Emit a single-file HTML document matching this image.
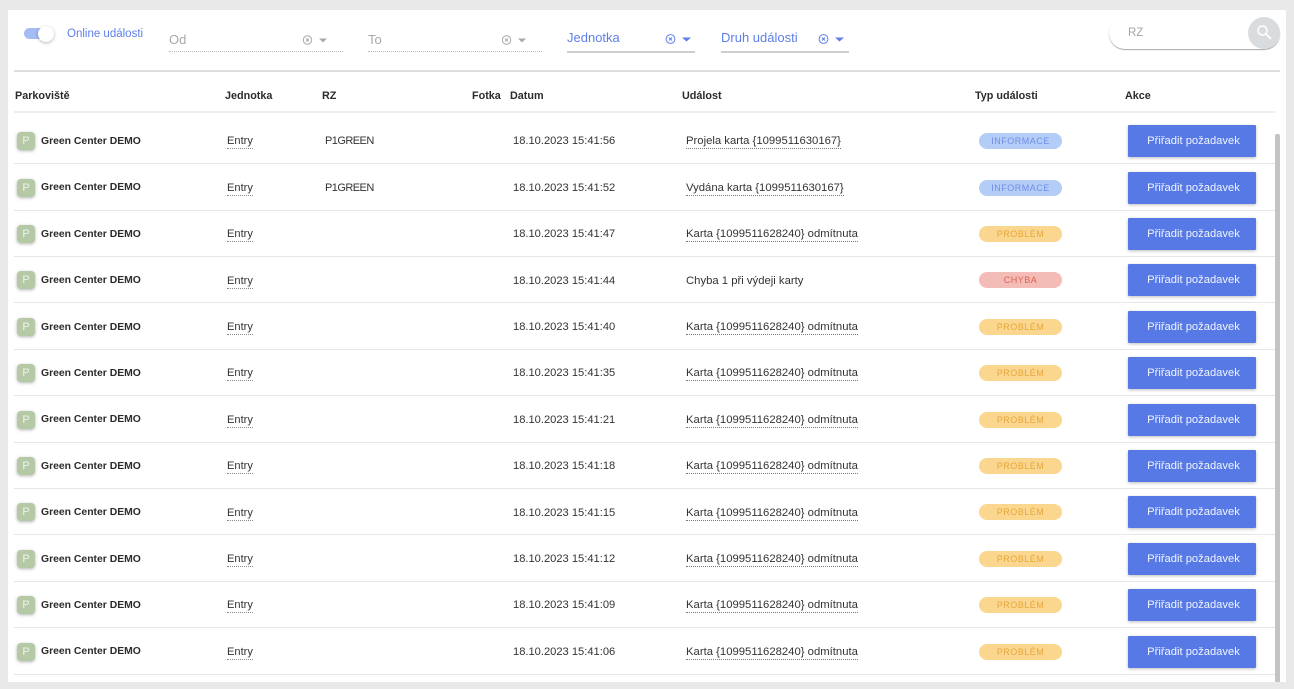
<!DOCTYPE html>
<html lang="cs">
<head>
<meta charset="utf-8">
<title>Online události</title>
<style>
html,body{margin:0;padding:0;width:1294px;height:689px;overflow:hidden;background:#e9e9e9}
body{font-family:"Liberation Sans",sans-serif;color:#222;position:relative}
*{box-sizing:border-box}
#card{position:absolute;left:8px;top:10px;width:1278px;height:672px;background:#fff}
.a{position:absolute;white-space:nowrap}
.h{position:absolute;top:89px;line-height:14px;font-size:10.8px;font-weight:bold;color:#2b2b2b;white-space:nowrap}
.sel{position:absolute;top:51px;height:1px;border-bottom:1px dotted #bbb}
.sel2{position:absolute;top:51px;height:2px;background:#cfcfcf}
.ph{position:absolute;font-size:13px;line-height:16px;white-space:nowrap}
.row{position:absolute;left:14px;width:1261px;height:46.4px;margin-top:.3px;border-bottom:1px solid #e6e6e6}
.row>*{position:absolute;white-space:nowrap}
.p{left:3px;top:14.5px;width:18px;height:18px;border-radius:4px;background:#b5c9a6;box-shadow:0 1px 3px rgba(0,0,0,.3);color:#eef3ea;font-size:11px;line-height:18px;text-align:center}
.n{left:27px;top:17.200px;font-size:10.400px;line-height:14px;font-weight:bold;color:#2b2b2b}
.e{left:213px;top:16.700px;font-size:11.100px;line-height:14px;color:#333;border-bottom:1px dotted #888}
.z{left:311px;top:16.700px;font-size:11px;line-height:14px;color:#333;letter-spacing:-.55px}
.d{left:499px;top:16.700px;font-size:11.150px;line-height:14px;color:#333}
.u{left:672px;top:16.700px;font-size:11.300px;line-height:14px;color:#333;border-bottom:1px dotted #777}
.t{left:965px;top:15.5px;width:83px;height:16px;border-radius:8px;font-size:9px;line-height:16px;text-align:center;letter-spacing:.5px}
.i{background:#b4cdf6;color:#6f8fe8}
.w{background:#fbd68f;color:#e4a83a}
.x{background:#f3bcb6;color:#e0604f}
.b{left:1113.5px;top:7.5px;width:128px;height:32px;padding-left:4px;background:#5679e6;border-radius:1px;box-shadow:0 1px 3px rgba(0,0,0,.25);color:#f1f4fe;font-size:11.200px;line-height:32px;text-align:center}
</style>
</head>
<body>
<div id="card"></div>

<div class="a" style="left:24px;top:28px;width:22px;height:11px;border-radius:5.5px;background:#a5bbf3"></div>
<div class="a" style="left:38px;top:26px;width:16px;height:16px;border-radius:50%;background:#fff;box-shadow:0 1px 3px rgba(0,0,0,.3)"></div>
<div class="a" style="left:67px;top:27px;font-size:11.500px;line-height:14px;color:#5e7fe8">Online události</div>

<div class="ph" style="left:169px;top:32px;color:#a8a8a8">Od</div>
<svg class="a" style="left:302px;top:35px" width="28" height="10" viewBox="0 0 28 10"><circle cx="5.5" cy="5" r="4.2" fill="none" stroke="#aaa"/><path d="M4 3.5l3 3M7 3.5l-3 3" stroke="#aaa"/><path d="M17 3.5h8l-4 4z" fill="#aaa"/></svg>
<div class="sel" style="left:169px;width:174px"></div>

<div class="ph" style="left:368px;top:32px;color:#a8a8a8">To</div>
<svg class="a" style="left:501px;top:35px" width="28" height="10" viewBox="0 0 28 10"><circle cx="5.5" cy="5" r="4.2" fill="none" stroke="#aaa"/><path d="M4 3.5l3 3M7 3.5l-3 3" stroke="#aaa"/><path d="M17 3.5h8l-4 4z" fill="#aaa"/></svg>
<div class="sel" style="left:368px;width:174px"></div>

<div class="ph" style="left:567px;top:30px;color:#5e7fe8">Jednotka</div>
<svg class="a" style="left:664.500px;top:34px" width="28" height="10" viewBox="0 0 28 10"><circle cx="5.5" cy="5" r="4.4" fill="none" stroke="#5e7fe8"/><path d="M4 3.5l3 3M7 3.5l-3 3" stroke="#5e7fe8"/><path d="M17 3.5h9l-4.500 4z" fill="#5e7fe8"/></svg>
<div class="sel2" style="left:567px;width:128px"></div>

<div class="ph" style="left:721px;top:30px;color:#5e7fe8">Druh události</div>
<svg class="a" style="left:818px;top:34px" width="28" height="10" viewBox="0 0 28 10"><circle cx="5.5" cy="5" r="4.4" fill="none" stroke="#5e7fe8"/><path d="M4 3.5l3 3M7 3.5l-3 3" stroke="#5e7fe8"/><path d="M17 3.5h9l-4.500 4z" fill="#5e7fe8"/></svg>
<div class="sel2" style="left:721px;width:128px"></div>

<div class="a" style="left:1109px;top:17px;width:171px;height:32px;border-radius:16px;background:#fff;box-shadow:0 1px 1px rgba(0,0,0,.35)"></div>
<div class="a" style="left:1128px;top:26px;font-size:11.500px;line-height:14px;color:#a5a5a5">RZ</div>
<div class="a" style="left:1248px;top:17px;width:32px;height:32px;border-radius:50%;background:#d8dcdf"></div>
<svg class="a" style="left:1256px;top:24px" width="17" height="17" viewBox="0 0 17 17"><circle cx="6.500" cy="6.500" r="4.500" fill="none" stroke="#fff" stroke-width="1.500"/><path d="M10 10l5 5" stroke="#fff" stroke-width="1.800"/></svg>

<div class="a" style="left:14px;top:69.500px;width:1266px;height:2px;background:#dedede"></div>

<div class="h" style="left:15px">Parkoviště</div>
<div class="h" style="left:225px">Jednotka</div>
<div class="h" style="left:322px">RZ</div>
<div class="h" style="left:472px">Fotka</div>
<div class="h" style="left:510px">Datum</div>
<div class="h" style="left:682px">Událost</div>
<div class="h" style="left:975px">Typ události</div>
<div class="h" style="left:1125px">Akce</div>
<div class="a" style="left:14px;top:111px;width:1261px;height:2px;background:#eeeeee"></div>

<div class="a" style="left:1275px;top:134px;width:5px;height:548px;background:#c4c4c4;border-radius:2px 2px 0 0"></div>

<div class="row" style="top:117.500px"><span class="p">P</span><span class="n">Green Center DEMO</span><span class="e">Entry</span><span class="z">P1GREEN</span><span class="d">18.10.2023 15:41:56</span><span class="u">Projela karta {1099511630167}</span><span class="t i">INFORMACE</span><span class="b">Přiřadit požadavek</span></div>
<div class="row" style="top:163.900px"><span class="p">P</span><span class="n">Green Center DEMO</span><span class="e">Entry</span><span class="z">P1GREEN</span><span class="d">18.10.2023 15:41:52</span><span class="u">Vydána karta {1099511630167}</span><span class="t i">INFORMACE</span><span class="b">Přiřadit požadavek</span></div>
<div class="row" style="top:210.300px"><span class="p">P</span><span class="n">Green Center DEMO</span><span class="e">Entry</span><span class="d">18.10.2023 15:41:47</span><span class="u">Karta {1099511628240} odmítnuta</span><span class="t w">PROBLÉM</span><span class="b">Přiřadit požadavek</span></div>
<div class="row" style="top:256.700px"><span class="p">P</span><span class="n">Green Center DEMO</span><span class="e">Entry</span><span class="d">18.10.2023 15:41:44</span><span class="u" style="border:0">Chyba 1 při výdeji karty</span><span class="t x">CHYBA</span><span class="b">Přiřadit požadavek</span></div>
<div class="row" style="top:303.100px"><span class="p">P</span><span class="n">Green Center DEMO</span><span class="e">Entry</span><span class="d">18.10.2023 15:41:40</span><span class="u">Karta {1099511628240} odmítnuta</span><span class="t w">PROBLÉM</span><span class="b">Přiřadit požadavek</span></div>
<div class="row" style="top:349.500px"><span class="p">P</span><span class="n">Green Center DEMO</span><span class="e">Entry</span><span class="d">18.10.2023 15:41:35</span><span class="u">Karta {1099511628240} odmítnuta</span><span class="t w">PROBLÉM</span><span class="b">Přiřadit požadavek</span></div>
<div class="row" style="top:395.900px"><span class="p">P</span><span class="n">Green Center DEMO</span><span class="e">Entry</span><span class="d">18.10.2023 15:41:21</span><span class="u">Karta {1099511628240} odmítnuta</span><span class="t w">PROBLÉM</span><span class="b">Přiřadit požadavek</span></div>
<div class="row" style="top:442.300px"><span class="p">P</span><span class="n">Green Center DEMO</span><span class="e">Entry</span><span class="d">18.10.2023 15:41:18</span><span class="u">Karta {1099511628240} odmítnuta</span><span class="t w">PROBLÉM</span><span class="b">Přiřadit požadavek</span></div>
<div class="row" style="top:488.700px"><span class="p">P</span><span class="n">Green Center DEMO</span><span class="e">Entry</span><span class="d">18.10.2023 15:41:15</span><span class="u">Karta {1099511628240} odmítnuta</span><span class="t w">PROBLÉM</span><span class="b">Přiřadit požadavek</span></div>
<div class="row" style="top:535.100px"><span class="p">P</span><span class="n">Green Center DEMO</span><span class="e">Entry</span><span class="d">18.10.2023 15:41:12</span><span class="u">Karta {1099511628240} odmítnuta</span><span class="t w">PROBLÉM</span><span class="b">Přiřadit požadavek</span></div>
<div class="row" style="top:581.500px"><span class="p">P</span><span class="n">Green Center DEMO</span><span class="e">Entry</span><span class="d">18.10.2023 15:41:09</span><span class="u">Karta {1099511628240} odmítnuta</span><span class="t w">PROBLÉM</span><span class="b">Přiřadit požadavek</span></div>
<div class="row" style="top:627.900px"><span class="p">P</span><span class="n">Green Center DEMO</span><span class="e">Entry</span><span class="d">18.10.2023 15:41:06</span><span class="u">Karta {1099511628240} odmítnuta</span><span class="t w">PROBLÉM</span><span class="b">Přiřadit požadavek</span></div>
</body>
</html>
